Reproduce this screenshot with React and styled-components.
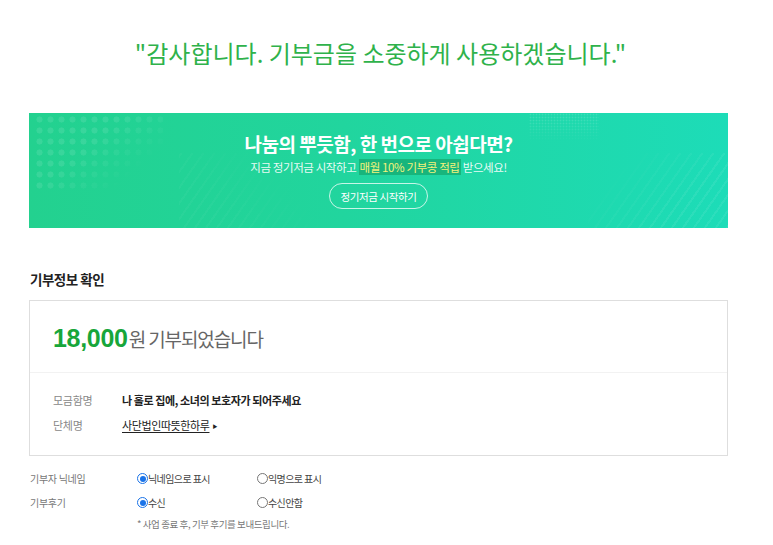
import React from "react";
import styled, { createGlobalStyle } from "styled-components";

const Global = createGlobalStyle`
  html, body { margin: 0; padding: 0; background: #fff; }
  body { font-family: "Noto Sans CJK KR", "Noto Sans", sans-serif; color: #222; }
  * { box-sizing: border-box; }
`;

const Page = styled.div`
  width: 699px;
  margin-left: 29px;
  padding-top: 36px;
`;

const Thanks = styled.h1`
  margin: 0;
  text-align: center;
  font-size: 24px;
  font-weight: 400;
  color: #2fb24b;
  letter-spacing: 0;
  line-height: 34px;
  padding-left: 4px;
`;

const Banner = styled.div`
  position: relative;
  margin-top: 43px;
  height: 115px;
  background: linear-gradient(90deg, #23d18f 0%, #21d59e 45%, #1ddcb8 100%);
  overflow: hidden;
  display: flex;
  flex-direction: column;
  align-items: center;
  color: #fff;
`;

const Dots = styled.div`
  position: absolute;
  left: 4px;
  top: 0;
  width: 130px;
  height: 80px;
  background-image: radial-gradient(circle, rgba(255,255,255,0.1) 2.8px, transparent 3.3px);
  background-size: 11px 11px;
  background-position: 1px 1px;
  -webkit-mask-image: linear-gradient(140deg, #000 40%, transparent 78%);
  mask-image: linear-gradient(140deg, #000 40%, transparent 78%);
`;

const SmallDots = styled.div`
  position: absolute;
  left: 500px;
  top: 0;
  width: 70px;
  height: 30px;
  background-image: radial-gradient(circle, rgba(255,255,255,0.13) 0.8px, transparent 1.1px);
  background-size: 3px 3px;
  -webkit-mask-image: linear-gradient(180deg, #000 30%, transparent 100%);
  mask-image: linear-gradient(180deg, #000 30%, transparent 100%);
`;

const Stripes = styled.div`
  position: absolute;
  right: 0;
  bottom: 0;
  width: 140px;
  height: 75px;
  background-image: repeating-linear-gradient(-55deg, rgba(255,255,255,0.07) 0 2px, transparent 2px 9px);
  -webkit-mask-image: linear-gradient(315deg, #000 30%, transparent 80%);
  mask-image: linear-gradient(315deg, #000 30%, transparent 80%);
`;

const Stripes2 = styled(Stripes)`
  left: 150px;
  right: auto;
  width: 160px;
  -webkit-mask-image: linear-gradient(45deg, rgba(0,0,0,0.5) 20%, transparent 70%);
  mask-image: linear-gradient(45deg, rgba(0,0,0,0.5) 20%, transparent 70%);
`;

const BannerTitle = styled.div`
  position: relative;
  margin-top: 18px;
  font-size: 19px;
  font-weight: 700;
  letter-spacing: -0.5px;
  line-height: 26px;
`;

const BannerSub = styled.div`
  position: relative;
  margin-top: 2px;
  font-size: 11.5px;
  letter-spacing: -0.4px;
  line-height: 16px;
  color: rgba(255,255,255,0.92);
`;

const Highlight = styled.span`
  background: #18b57c;
  color: #f4f27a;
  padding: 0 1px;
`;

const PillButton = styled.button`
  position: relative;
  margin-top: 8px;
  width: 99px;
  height: 26px;
  border-radius: 13px;
  border: 1px solid rgba(255,255,255,0.75);
  background: transparent;
  color: #fff;
  font-family: inherit;
  font-size: 10.5px;
  letter-spacing: -0.4px;
  padding: 0;
`;

const SectionTitle = styled.h2`
  margin: 41px 0 0 1px;
  font-size: 13.5px;
  font-weight: 700;
  color: #222;
  letter-spacing: -0.5px;
  line-height: 20px;
`;

const InfoBox = styled.div`
  margin-top: 11px;
  border: 1px solid #dedede;
`;

const AmountRow = styled.div`
  height: 72px;
  padding-left: 23px;
  padding-top: 4px;
  display: flex;
  align-items: center;
  border-bottom: 1px solid #f2f2f2;
`;

const Amount = styled.span`
  font-family: "Liberation Sans", Arial, sans-serif;
  font-weight: 700;
  font-size: 25px;
  color: #17a63a;
  letter-spacing: -0.3px;
`;

const AmountText = styled.span`
  font-size: 19px;
  color: #666;
  letter-spacing: -1.1px;
  margin-left: 1px;
`;

const Details = styled.div`
  padding: 19px 0 21px 23px;
  display: grid;
  grid-template-columns: 69px 1fr;
  row-gap: 9px;
`;

const DLabel = styled.div`
  font-size: 11px;
  color: #888;
  line-height: 16px;
  letter-spacing: -0.3px;
`;

const DValue = styled.div`
  font-size: 11px;
  color: #222;
  font-weight: ${p => (p.$bold ? 700 : 400)};
  line-height: 16px;
  letter-spacing: -0.4px;
`;

const OrgLink = styled.a`
  color: #222;
  text-decoration: underline;
  text-underline-offset: 2px;
`;

const Caret = styled.span`
  font-size: 5px;
  margin-left: 3px;
  vertical-align: 2px;
`;

const Options = styled.div`
  margin-top: 14px;
  margin-left: 1px;
  display: grid;
  grid-template-columns: 107px 120px 1fr;
  row-gap: 7px;
  align-items: center;
`;

const OLabel = styled.div`
  font-size: 10px;
  color: #777;
  line-height: 17px;
  letter-spacing: -0.3px;
`;

const Radio = styled.label`
  display: flex;
  align-items: center;
  font-size: 10px;
  color: #444;
  letter-spacing: -0.6px;
  line-height: 17px;
`;

const RadioDot = styled.span`
  width: 11px;
  height: 11px;
  border-radius: 50%;
  border: 1px solid ${p => (p.$on ? "#1a73e8" : "#767676")};
  display: inline-flex;
  align-items: center;
  justify-content: center;
  margin-right: 0;
  &::after {
    content: "";
    width: 6px;
    height: 6px;
    border-radius: 50%;
    background: ${p => (p.$on ? "#1a73e8" : "transparent")};
  }
`;

const Note = styled.div`
  grid-column: 2 / 4;
  font-size: 9.5px;
  color: #777;
  letter-spacing: -0.4px;
  line-height: 14px;
  margin-top: -1px;
`;

const Opt = ({ on, children }) => (
  <Radio>
    <RadioDot $on={on} />
    {children}
  </Radio>
);

export default function App() {
  return (
    <>
      <Global />
      <Page>
        <Thanks>"감사합니다. 기부금을 소중하게 사용하겠습니다."</Thanks>
        <Banner>
          <Dots />
          <SmallDots />
          <Stripes2 />
          <Stripes />
          <BannerTitle>나눔의 뿌듯함, 한 번으로 아쉽다면?</BannerTitle>
          <BannerSub>
            지금 정기저금 시작하고 <Highlight>매월 10% 기부콩 적립</Highlight> 받으세요!
          </BannerSub>
          <PillButton>정기저금 시작하기</PillButton>
        </Banner>
        <SectionTitle>기부정보 확인</SectionTitle>
        <InfoBox>
          <AmountRow>
            <Amount>18,000</Amount>
            <AmountText>원 기부되었습니다</AmountText>
          </AmountRow>
          <Details>
            <DLabel>모금함명</DLabel>
            <DValue $bold>나 홀로 집에, 소녀의 보호자가 되어주세요</DValue>
            <DLabel>단체명</DLabel>
            <DValue>
              <OrgLink>사단법인따뜻한하루</OrgLink>
              <Caret>▶</Caret>
            </DValue>
          </Details>
        </InfoBox>
        <Options>
          <OLabel>기부자 닉네임</OLabel>
          <Opt on>닉네임으로 표시</Opt>
          <Opt>익명으로 표시</Opt>
          <OLabel>기부후기</OLabel>
          <Opt on>수신</Opt>
          <Opt>수신안함</Opt>
          <Note>* 사업 종료 후, 기부 후기를 보내드립니다.</Note>
        </Options>
      </Page>
    </>
  );
}
